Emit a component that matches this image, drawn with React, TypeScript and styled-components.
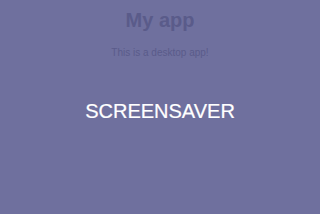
import { FC } from "react";
import styled, { createGlobalStyle } from "styled-components";

const GlobalStyle = createGlobalStyle`
  html, body {
    margin: 0;
    padding: 0;
    background: #6f709e;
  }
  body {
    font-family: "Liberation Sans", Arial, sans-serif;
  }
`;

const App: FC = () => {
  return (
    <>
      <GlobalStyle />
      <Screen>
        <Header>
          <Title>My app</Title>
          <Subtitle>This is a desktop app!</Subtitle>
        </Header>
        <Saver>SCREENSAVER</Saver>
      </Screen>
    </>
  );
};

const Screen = styled.main`
  display: flex;
  flex-direction: column;
  align-items: center;
  width: 320px;
  height: 214px;
  background-color: #6f709e;
  overflow: hidden;
`;

const Header = styled.header`
  display: flex;
  flex-direction: column;
  align-items: center;
  padding-top: 9px;
`;

const Title = styled.h1`
  margin: 0;
  font-size: 20px;
  font-weight: 700;
  line-height: 23px;
  color: #5a5b8a;
`;

const Subtitle = styled.p`
  margin: 15px 0 0;
  font-size: 10px;
  line-height: 12px;
  color: #5a5b8a;
`;

const Saver = styled.div`
  margin-top: 41px;
  font-size: 20px;
  line-height: 23px;
  color: #ffffff;
  -webkit-text-stroke: 0.2px #ffffff;
`;

export default App;
